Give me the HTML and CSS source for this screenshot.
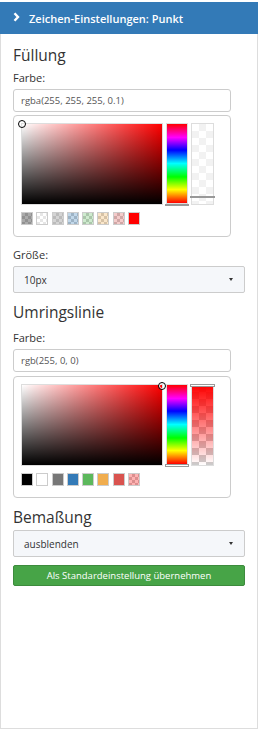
FILE: index.html
```html
<!DOCTYPE html>
<html lang="de">
<head>
    <meta charset="UTF-8">
    <meta name="viewport" content="width=device-width, initial-scale=1.0">
    <title>Zeichen-Einstellungen</title>
    <link rel="stylesheet" href="styles.css">
</head>
<body>
    <div class="panel">
        <div class="panel-heading">
            <svg class="chevron" width="7" height="10" viewBox="0 0 7 10">
                <polyline points="1.5,1.2 5,5 1.5,8.8" fill="none" stroke="#fff" stroke-width="2.4"/>
            </svg>
            <span>Zeichen-Einstellungen: Punkt</span>
        </div>

        <div class="panel-body">
            <h4>Füllung</h4>
            <label>Farbe:</label>
            <input class="form-control" type="text" value="rgba(255, 255, 255, 0.1)">
            <div class="colorpicker">
                <div class="cp-top">
                    <div class="cp-sat"><i class="cp-dot" style="left: 0; top: 0;"></i></div>
                    <div class="cp-hue"><i class="cp-mark solid" style="top: 80px;"></i></div>
                    <div class="cp-alpha fill-alpha"><i class="cp-mark solid" style="top: 72px;"></i></div>
                </div>
                <div class="cp-swatches">
                    <span class="sw"><b style="background: rgba(85, 85, 85, 0.5);"></b></span>
                    <span class="sw"><b style="background: rgba(255, 255, 255, 0.5);"></b></span>
                    <span class="sw"><b style="background: rgba(170, 170, 170, 0.5);"></b></span>
                    <span class="sw"><b style="background: rgba(51, 122, 183, 0.3);"></b></span>
                    <span class="sw"><b style="background: rgba(92, 184, 92, 0.3);"></b></span>
                    <span class="sw"><b style="background: rgba(240, 173, 78, 0.3);"></b></span>
                    <span class="sw"><b style="background: rgba(217, 83, 79, 0.3);"></b></span>
                    <span class="sw"><b style="background: #ff0000;"></b></span>
                </div>
            </div>

            <label class="label-gap">Größe:</label>
            <div class="select">10px<span class="caret"></span></div>

            <h4 class="heading-gap">Umringslinie</h4>
            <label class="label-second">Farbe:</label>
            <input class="form-control" type="text" value="rgb(255, 0, 0)">
            <div class="colorpicker picker-second">
                <div class="cp-top">
                    <div class="cp-sat"><i class="cp-dot" style="left: 140px; top: 1px;"></i></div>
                    <div class="cp-hue"><i class="cp-mark open" style="top: 79px;"></i></div>
                    <div class="cp-alpha line-alpha"><i class="cp-mark open" style="top: -1px;"></i></div>
                </div>
                <div class="cp-swatches">
                    <span class="sw"><b style="background: #000;"></b></span>
                    <span class="sw"><b style="background: #fff;"></b></span>
                    <span class="sw"><b style="background: #777;"></b></span>
                    <span class="sw"><b style="background: #337ab7;"></b></span>
                    <span class="sw"><b style="background: #5cb85c;"></b></span>
                    <span class="sw"><b style="background: #f0ad4e;"></b></span>
                    <span class="sw"><b style="background: #d9534f;"></b></span>
                    <span class="sw"><b style="background: rgba(255, 0, 0, 0.3);"></b></span>
                </div>
            </div>

            <h4 class="heading-gap">Bemaßung</h4>
            <div class="select select-tight">ausblenden<span class="caret"></span></div>

            <button class="btn-success">Als Standardeinstellung übernehmen</button>
        </div>
    </div>
</body>
</html>
```

FILE: styles.css
```css
body {
    margin: 0;
    font-family: 'Open Sans', 'Noto Sans', sans-serif;
    color: #333;
    background: #fff;
}

.panel {
    box-sizing: border-box;
    width: 258px;
    height: 727px;
    margin-top: 2px;
    border: 1px solid #ddd;
}

/* blue title bar */
.panel-heading {
    display: flex;
    align-items: center;
    height: 32px;
    margin: -1px -1px 0 -1px;
    padding-left: 13px;
    background: #337ab7;
    color: #fff;
    font-size: 11px;
    font-weight: 600;
}

.chevron {
    margin-right: 9px;
    margin-top: -2px;
}

.panel-body {
    padding: 11px 11px 0 12px;
}

h4 {
    margin: 0;
    font-size: 15.5px;
    font-weight: 400;
    line-height: 20px;
}

.heading-gap {
    margin-top: 9px;
}

label {
    display: block;
    margin-top: 5px;
    font-size: 11px;
    line-height: 15px;
}

.label-gap {
    margin-top: 10px;
}

.label-second {
    margin-top: 8px;
}

.form-control {
    box-sizing: border-box;
    display: block;
    width: 218px;
    height: 23px;
    margin-top: 4px;
    padding: 0 7px;
    border: 1px solid #ccc;
    border-radius: 3px;
    font-family: inherit;
    font-size: 9.5px;
    color: #555;
}

/* colour picker box */
.colorpicker {
    box-sizing: border-box;
    width: 218px;
    margin-top: 3px;
    padding: 7px 7px 11px 7px;
    border: 1px solid #ccc;
    border-radius: 4px;
}

.picker-second {
    margin-top: 4px;
}

.cp-top {
    display: flex;
    height: 82px;
}

.cp-sat {
    position: relative;
    box-sizing: border-box;
    width: 142px;
    height: 82px;
    border: 1px solid #ddd;
    background:
        linear-gradient(to bottom, rgba(0, 0, 0, 0), #000),
        linear-gradient(to right, #fff, rgba(255, 255, 255, 0)),
        #f00;
}

.cp-dot {
    position: absolute;
    width: 6px;
    height: 6px;
    margin: -4px 0 0 -4px;
    border: 1px solid #000;
    border-radius: 50%;
    box-shadow: inset 0 0 0 1px #fff;
}

.cp-hue {
    position: relative;
    box-sizing: border-box;
    width: 22px;
    height: 81px;
    margin-left: 3px;
    border: 1px solid #ddd;
    background: linear-gradient(to bottom, #f00 0%, #f0f 17%, #00f 33%, #0ff 50%, #0f0 67%, #ff0 83%, #f00 100%);
}

.cp-alpha {
    position: relative;
    box-sizing: border-box;
    width: 23px;
    height: 82px;
    margin-left: 3px;
    border: 1px solid #ddd;
}

.fill-alpha {
    background:
        linear-gradient(rgba(255, 255, 255, 0.75), rgba(255, 255, 255, 0.75)),
        repeating-conic-gradient(#ccc 0 25%, #fff 0 50%) 0 0 / 14px 14px;
}

.line-alpha {
    background:
        linear-gradient(to bottom, #f00, rgba(255, 0, 0, 0)),
        repeating-conic-gradient(#ccc 0 25%, #fff 0 50%) 0 0 / 14px 14px;
}

.cp-mark {
    position: absolute;
    left: -2px;
    right: -2px;
    height: 1px;
}

.cp-mark.solid {
    height: 2px;
    background: #999;
}

.cp-mark.open {
    height: 1px;
    border: 1px solid #999;
    background: #fff;
}

.cp-swatches {
    display: flex;
    gap: 3.3px;
    margin-top: 7px;
}

.sw {
    box-sizing: border-box;
    display: block;
    width: 12px;
    height: 13px;
    border: 1px solid #ccc;
    background: repeating-conic-gradient(#ccc 0 25%, #fff 0 50%) 0 0 / 6px 6px;
}

.sw b {
    display: block;
    width: 100%;
    height: 100%;
}

/* dropdowns */
.select {
    box-sizing: border-box;
    display: flex;
    align-items: center;
    justify-content: space-between;
    width: 232px;
    height: 27px;
    margin-top: 4px;
    padding: 0 11px 0 10px;
    border: 1px solid #ccc;
    border-radius: 2px;
    background: #f5f7fa;
    font-size: 10px;
}

.select-tight {
    margin-top: 3px;
}

.caret {
    width: 0;
    height: 0;
    border-left: 2.5px solid transparent;
    border-right: 2.5px solid transparent;
    border-top: 3px solid #333;
}

.btn-success {
    display: block;
    box-sizing: border-box;
    width: 232px;
    height: 21px;
    margin-top: 8px;
    padding: 0;
    border: 1px solid #3d8b3d;
    border-radius: 2px;
    background: #47a447;
    color: #fff;
    font-family: inherit;
    font-size: 9.5px;
}
```
